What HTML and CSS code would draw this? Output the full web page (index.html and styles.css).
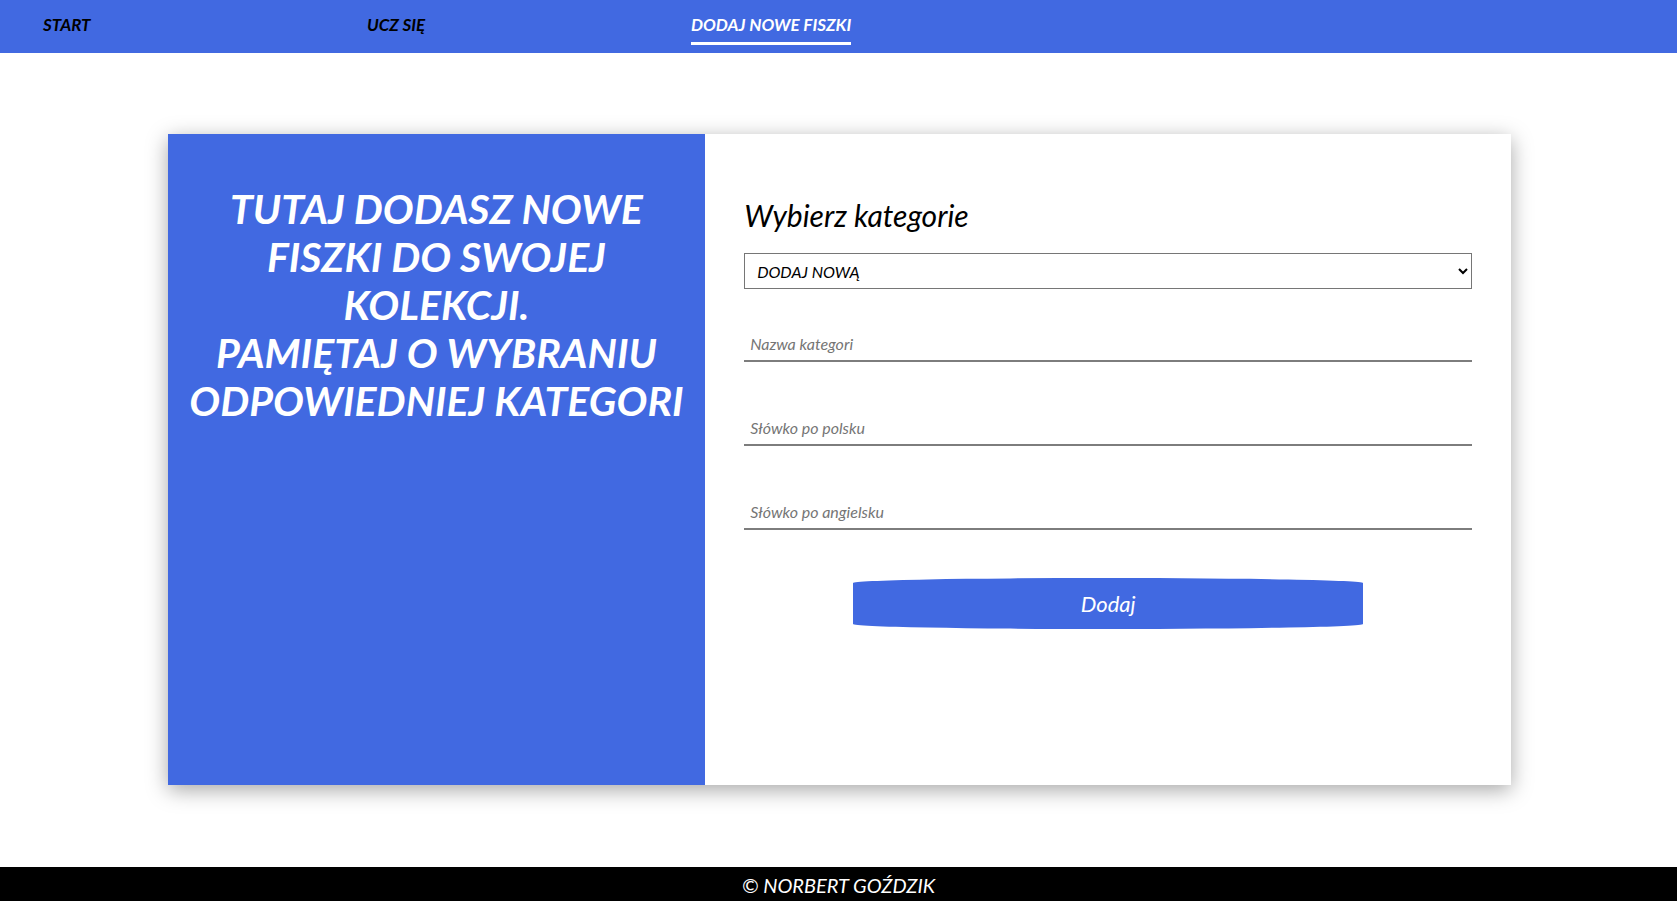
FILE: index.html
```html
<!DOCTYPE html>
<html lang="pl">
<head>
<meta charset="utf-8">
<title>Dodaj nowe fiszki</title>
<link rel="stylesheet" href="styles.css">
</head>
<body>
<nav class="topnav">
  <ul class="nav-list">
    <li class="nav-item"><a class="nav-link" href="#">START</a></li>
    <li class="nav-item"><a class="nav-link" href="#">UCZ SIĘ</a></li>
    <li class="nav-item"><a class="nav-link nav-link--active" href="#">DODAJ NOWE FISZKI</a></li>
  </ul>
</nav>
<main class="page">
  <section class="card">
    <div class="card-info">
      <h1 class="info-title">TUTAJ DODASZ NOWE FISZKI DO SWOJEJ KOLEKCJI.<br>PAMIĘTAJ O WYBRANIU ODPOWIEDNIEJ KATEGORI</h1>
    </div>
    <form class="card-form">
      <h2 class="form-title">Wybierz kategorie</h2>
      <select class="form-select">
        <option>DODAJ NOWĄ</option>
      </select>
      <input class="form-input" type="text" placeholder="Nazwa kategori">
      <input class="form-input form-input--spaced" type="text" placeholder="Słówko po polsku">
      <input class="form-input form-input--spaced" type="text" placeholder="Słówko po angielsku">
      <button class="form-button" type="button">Dodaj</button>
    </form>
  </section>
</main>
<footer class="footer">© NORBERT GOŹDZIK</footer>
</body>
</html>
```
FILE: styles.css
```css
* {
  box-sizing: border-box;
}

html, body {
  margin: 0;
  padding: 0;
}

body {
  min-height: 100vh;
  display: flex;
  flex-direction: column;
  font-family: Lato, "Open Sans", sans-serif;
  font-style: italic;
  background: #ffffff;
  color: #000000;
}

.topnav {
  height: 53px;
  background: #4169e1;
  padding-top: 15px;
}

.nav-list {
  display: flex;
  margin: 0;
  padding: 0 0 0 43px;
  list-style: none;
}

.nav-item {
  width: 324px;
}

.nav-link {
  display: inline-block;
  font-size: 17px;
  font-weight: 700;
  line-height: 20px;
  color: #000000;
  text-decoration: none;
  padding-bottom: 7px;
  border-bottom: 3px solid transparent;
}

.nav-link--active {
  color: #ffffff;
  border-bottom-color: #ffffff;
}

.page {
  flex: 1;
  padding-top: 81px;
}

.card {
  width: calc(80% + 2px);
  height: 651px;
  margin: 0 auto 0 10%;
  display: flex;
  background: #ffffff;
  box-shadow: 0 5px 20px rgba(0, 0, 0, 0.35);
}

.card-info {
  width: 40%;
  background: #4169e1;
  padding: 51px 12px 0;
}

.info-title {
  margin: 0;
  font-size: 41px;
  line-height: 48px;
  font-weight: 700;
  font-style: italic;
  color: #ffffff;
  text-align: center;
}

.card-form {
  flex: 1;
  padding: 63px 39px 0 39px;
}

.form-title {
  margin: 0 0 20px;
  font-size: 30px;
  line-height: 36px;
  font-weight: 400;
  font-style: italic;
  color: #000000;
}

.form-select {
  display: block;
  width: 100%;
  height: 36px;
  border: 1px solid #767676;
  border-radius: 0;
  background: #ffffff;
  padding: 0 8px;
  font-family: Lato, "Open Sans", sans-serif;
  font-style: italic;
  font-size: 16px;
  color: #000000;
}

.form-input {
  display: block;
  width: 100%;
  height: 40px;
  margin-top: 33px;
  border: none;
  border-bottom: 2px solid #7d7d7d;
  padding: 6px 6px 2px;
  font-family: Lato, "Open Sans", sans-serif;
  font-style: italic;
  font-size: 16px;
  color: #000000;
  background: transparent;
  outline: none;
}

.form-input--spaced {
  margin-top: 44px;
}

.form-input::placeholder {
  color: #757575;
}

.form-button {
  display: block;
  width: 70%;
  height: 51px;
  margin: 48px auto 0;
  border: none;
  border-radius: 50% / 5px;
  background: #4169e1;
  color: #ffffff;
  font-family: Lato, "Open Sans", sans-serif;
  font-style: italic;
  font-size: 22px;
}

.footer {
  height: 34px;
  padding-top: 2px;
  line-height: 32px;
  background: #000000;
  color: #ffffff;
  text-align: center;
  font-size: 20px;
}
```
